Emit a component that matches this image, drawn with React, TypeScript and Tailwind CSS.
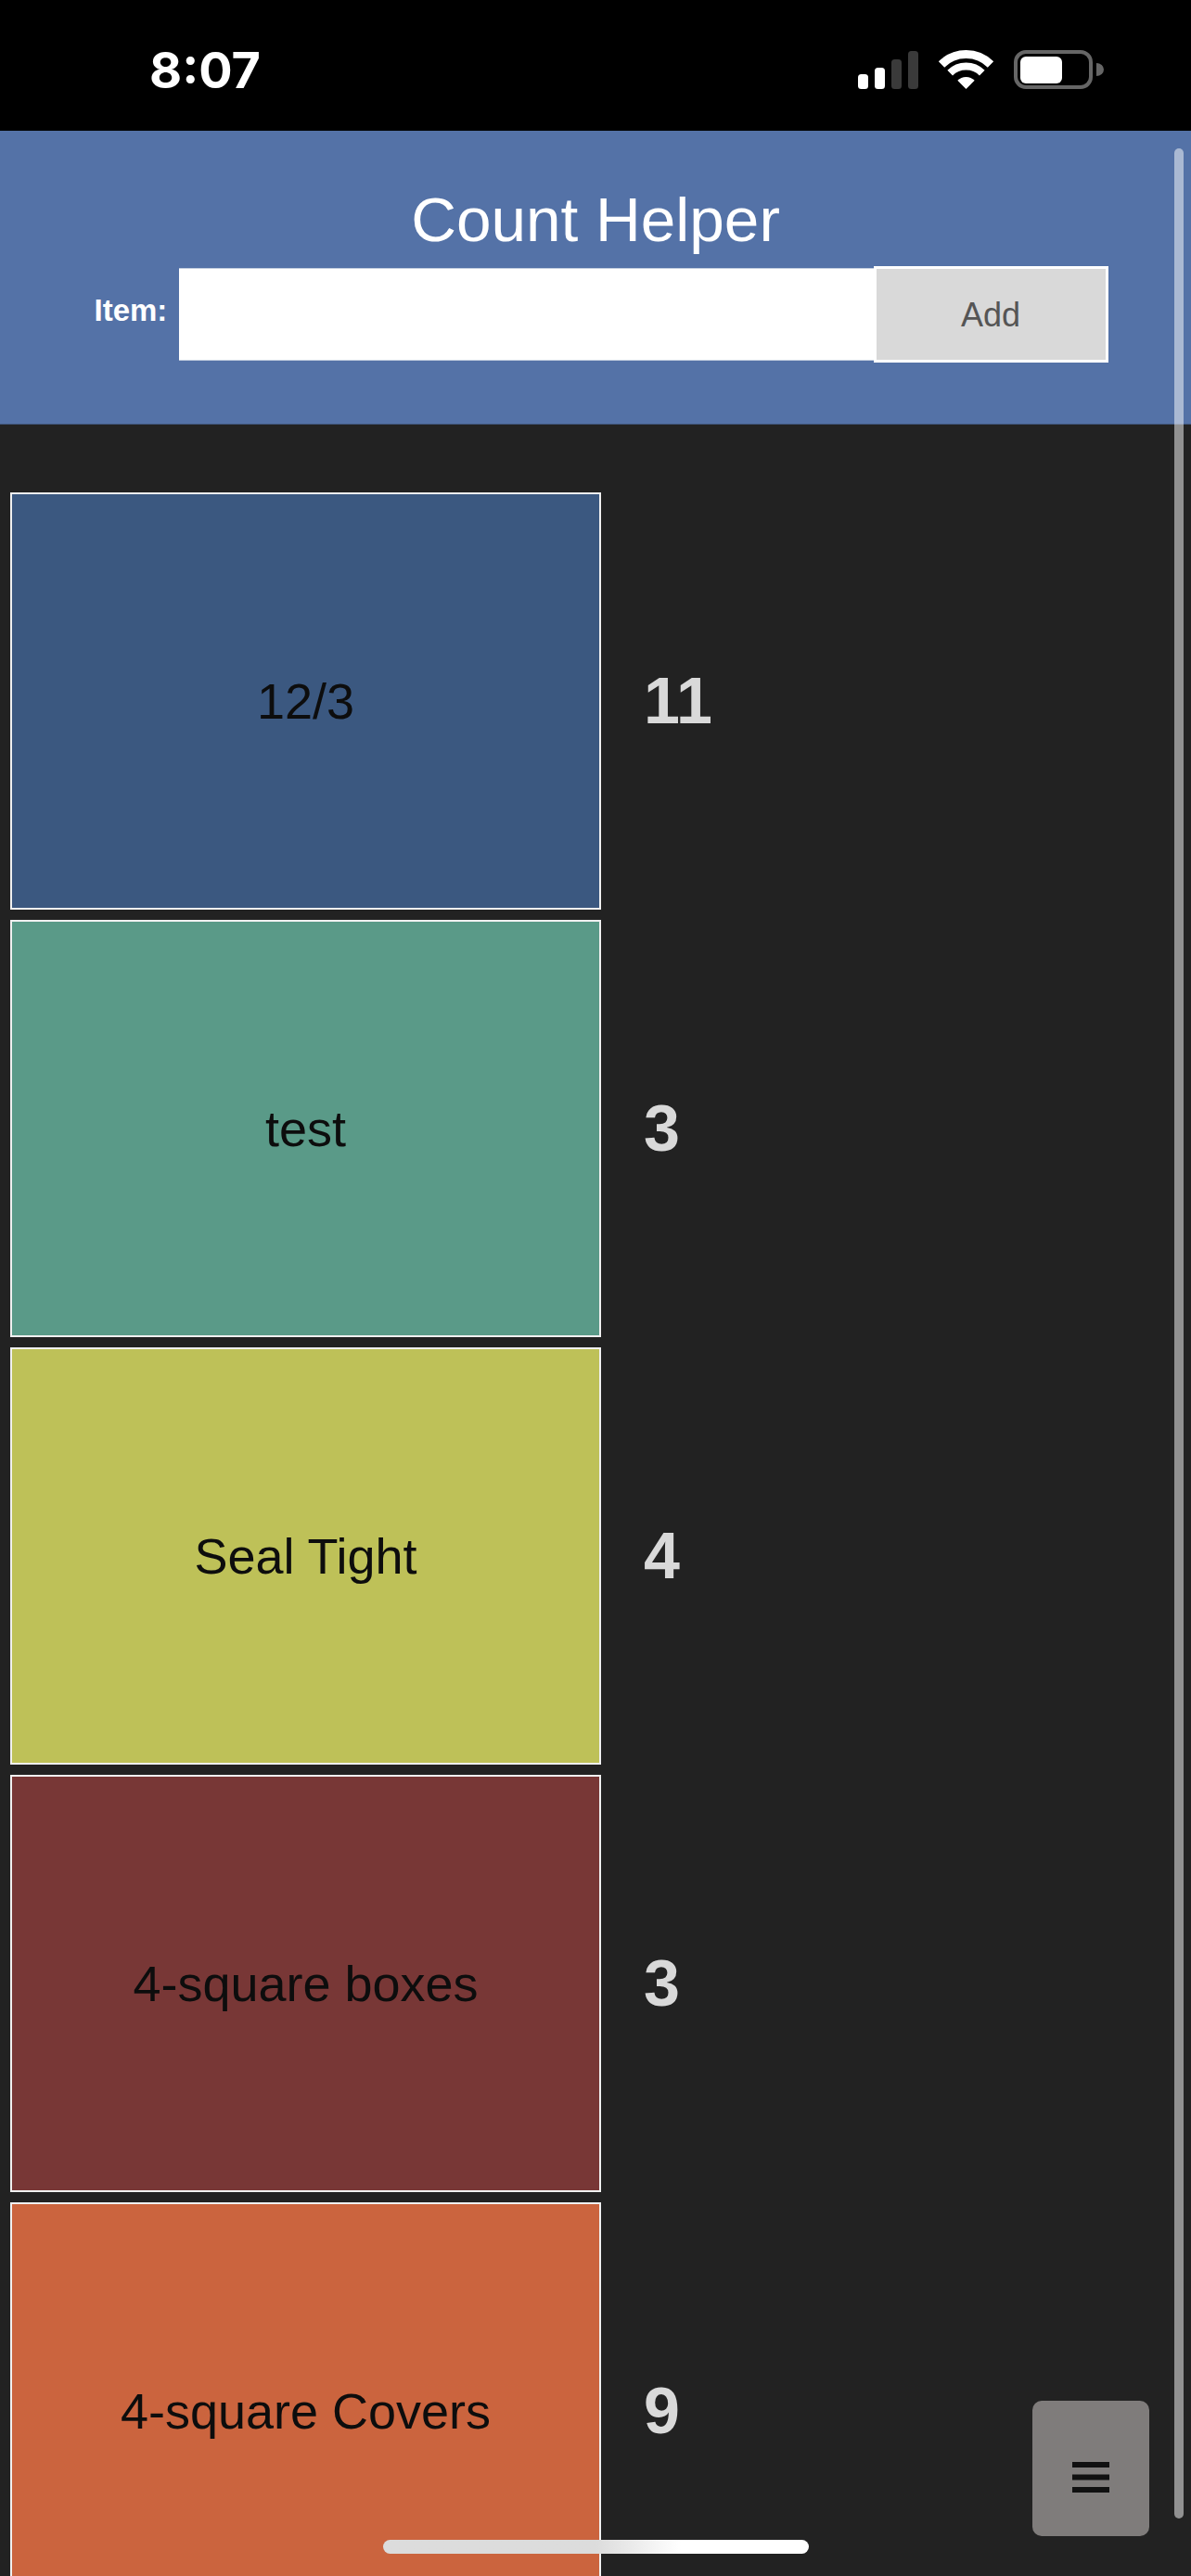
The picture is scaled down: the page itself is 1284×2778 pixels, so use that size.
const items = [
  { name: "12/3", count: 11, color: "bg-[#3b5880]" },
  { name: "test", count: 3, color: "bg-[#5a9a88]" },
  { name: "Seal Tight", count: 4, color: "bg-[#bec158]" },
  { name: "4-square boxes", count: 3, color: "bg-[#783736]" },
  { name: "4-square Covers", count: 9, color: "bg-[#cb643e]" },
];

function StatusIcons() {
  return (
    <svg width="270" height="50" viewBox="920 50 270 50" className="block">
      <rect x="925" y="80" width="11" height="16" rx="3.5" fill="#fff" />
      <rect x="943" y="73" width="11" height="23" rx="3.5" fill="#fff" />
      <rect x="961" y="64" width="11" height="32" rx="3.5" fill="#3a3a3a" />
      <rect x="979" y="55" width="11" height="41" rx="3.5" fill="#3a3a3a" />
      <path d="M1015 69.5A37.5 37.5 0 0 1 1068 69.5" fill="none" stroke="#fff" strokeWidth="9" />
      <path d="M1024.2 78.7A24.5 24.5 0 0 1 1058.8 78.7" fill="none" stroke="#fff" strokeWidth="8" />
      <path d="M1041.5 96L1032.3 86.8A13 13 0 0 1 1050.7 86.8Z" fill="#fff" />
      <rect x="1095" y="56" width="81" height="38" rx="11" fill="none" stroke="#666" strokeWidth="4" />
      <rect x="1100" y="61" width="45" height="29" rx="6" fill="#fff" />
      <path d="M1182 68A8 7 0 0 1 1182 82Z" fill="#666" />
    </svg>
  );
}

export default function App() {
  return (
    <div className="relative w-[1284px] h-[2778px] overflow-hidden bg-[#222222] font-['Liberation_Sans',Arial,sans-serif]">
      <div className="h-[141px] bg-black flex items-start justify-between pl-[161px] pr-[94px]">
        <span className="mt-[44px] text-[54px] leading-[64px] font-bold text-white font-['Inter',sans-serif]">8:07</span>
        <div className="mt-[50px]"><StatusIcons /></div>
      </div>
      <header className="h-[317px] bg-[#5472a7] border-b border-[#3d4f70] flex flex-col items-center pt-[57px]">
        <h1 className="text-[67.5px] leading-[78px] font-normal text-white">Count Helper</h1>
        <div className="flex items-center w-[1094px] ml-[13px] mt-[11px]">
          <label className="w-[91px] mb-[8px] text-[33px] leading-[36px] font-bold text-white">Item:</label>
          <input className="w-[749px] h-[100px] bg-white border-y border-[#c5cfe0] outline-none" />
          <button className="w-[253px] h-[104px] bg-[#d9d9d9] border-[3px] border-white pt-[2px] text-[36px] text-[#555555]">Add</button>
        </div>
      </header>
      <main className="flex flex-col gap-[11px] pt-[73px] pl-[11px]">
        {items.map((it) => (
          <div key={it.name} className="flex items-center shrink-0">
            <div className={`w-[637px] h-[450px] shrink-0 border-2 border-[#f0f0f0] flex items-center justify-center text-[54px] text-[#0d0d0d] ${it.color}`}>
              {it.name}
            </div>
            <span className="ml-[46px] text-[70px] font-bold text-[#d9d9d9]">{it.count}</span>
          </div>
        ))}
      </main>
      <div className="absolute left-[1266px] top-[160px] w-[10px] h-[2556px] rounded-full bg-white/50" />
      <button className="absolute left-[1113px] top-[2589px] w-[126px] h-[146px] rounded-[10px] bg-[#7f7c7b] flex items-center justify-center">
        <svg width="40" height="33" viewBox="0 0 40 33" className="block mt-[18px]">
          <rect x="0" y="0" width="40" height="6" fill="#111" />
          <rect x="0" y="13.5" width="40" height="6" fill="#111" />
          <rect x="0" y="27" width="40" height="6" fill="#111" />
        </svg>
      </button>
      <div className="absolute left-[413px] top-[2739px] w-[459px] h-[15px] rounded-full bg-gradient-to-r from-[#dcdcdc] from-50% to-white to-70%" />
    </div>
  );
}
